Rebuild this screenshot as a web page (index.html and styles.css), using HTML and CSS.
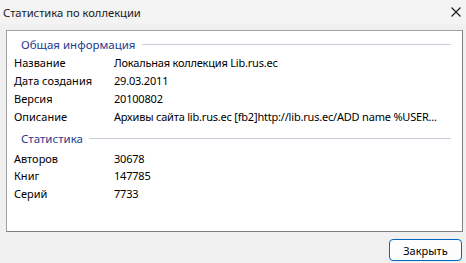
FILE: index.html
```html
<!DOCTYPE html>
<html lang="ru">
<head>
    <meta charset="UTF-8">
    <meta name="viewport" content="width=device-width, initial-scale=1.0">
    <title>Статистика по коллекции</title>
    <link rel="stylesheet" href="styles.css">
</head>
<body>
    <div class="window">
        <div class="titlebar">
            <span class="title">Статистика по коллекции</span>
            <svg class="close" width="10" height="10" viewBox="0 0 10 10">
                <path d="M0.5 0.5 L9.5 9.5 M9.5 0.5 L0.5 9.5" stroke="#1a1a1a" stroke-width="1.1" fill="none"/>
            </svg>
        </div>
        <div class="content">
            <div class="panel">
                <div class="group-title"><span>Общая информация</span></div>
                <div class="row"><span class="label">Название</span><span class="value">Локальная коллекция Lib.rus.ec</span></div>
                <div class="row"><span class="label">Дата создания</span><span class="value">29.03.2011</span></div>
                <div class="row"><span class="label">Версия</span><span class="value">20100802</span></div>
                <div class="row"><span class="label">Описание</span><span class="value">Архивы сайта lib.rus.ec [fb2]http://lib.rus.ec/ADD name %USER...</span></div>

                <div class="group-title second"><span>Статистика</span></div>
                <div class="row"><span class="label">Авторов</span><span class="value">30678</span></div>
                <div class="row"><span class="label">Книг</span><span class="value">147785</span></div>
                <div class="row"><span class="label">Серий</span><span class="value">7733</span></div>
            </div>
            <div class="footer">
                <button class="btn">Закрыть</button>
            </div>
        </div>
    </div>
</body>
</html>
```

FILE: styles.css
```css
body {
    margin: 0;
    background: #f0f0f0;
    font-family: "Noto Sans", "Open Sans", sans-serif;
    font-size: 11px;
    color: #000;
}

.window {
    width: 466px;
    height: 263px;
    overflow: hidden;
}

.titlebar {
    height: 24px;
    display: flex;
    align-items: center;
    justify-content: space-between;
    padding: 0 5px 0 3px;
    background: #f3f3f3;
}

.title {
    font-size: 11.2px;
    color: #1a1a1a;
}

.content {
    padding: 6px 3px 0 6px;
}

.panel {
    height: 196px;
    background: #fff;
    border: 1px solid #a0a0a0;
    border-right-color: #7f7f7f;
    border-bottom-color: #7f7f7f;
    padding: 4px 11px 0 7px;
}

.group-title {
    height: 18px;
    display: flex;
    align-items: center;
    gap: 6px;
    padding-left: 7px;
    margin-bottom: 1px;
    color: #1e3b8a;
    font-size: 11.5px;
}

.group-title::after {
    content: "";
    flex: 1;
    height: 1px;
    background: #c8cdd8;
}

.group-title.second {
    margin-top: 4px;
    margin-bottom: 2px;
}

.row {
    height: 17.8px;
    display: flex;
    align-items: center;
    white-space: nowrap;
}

.label {
    width: 100px;
    flex: none;
}

.value {
    flex: 1;
    min-width: 0;
    letter-spacing: -0.2px;
}

.footer {
    display: flex;
    justify-content: flex-end;
    padding: 7px 1px 0 0;
}

.btn {
    width: 73px;
    height: 22px;
    font-family: inherit;
    font-size: 11px;
    color: #000;
    background: #fdfdfd;
    border: 1px solid #0067c0;
    border-radius: 4px;
    padding: 0;
}
```
